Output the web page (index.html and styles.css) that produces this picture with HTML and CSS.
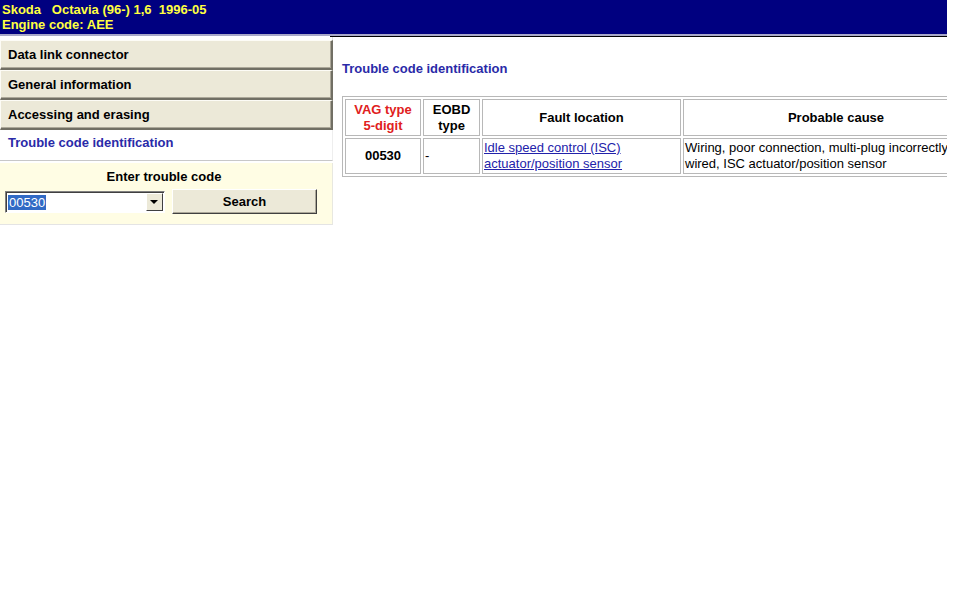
FILE: index.html
```html
<!DOCTYPE html>
<html>
	<head>
		<meta charset="utf-8">
		<title>Trouble code identification</title>
		<link rel="stylesheet" href="styles.css">
	</head>
	<body>
		<div id="page">
			<div class="header">
				<div>Skoda&nbsp;&nbsp;&nbsp;Octavia (96-) 1,6&nbsp;&nbsp;1996-05</div>
				<div>Engine code: AEE</div>
			</div>
			<div class="main">
				<div class="nav">
					<div class="grip"></div>
					<a class="item">Data link connector</a>
					<a class="item">General information</a>
					<a class="item">Accessing and erasing</a>
					<a class="item current">Trouble code identification</a>
					<div class="search">
						<div class="search-title">Enter trouble code</div>
						<div class="search-row">
							<div class="combo">
								<span class="combo-text"><span class="sel">00530</span></span>
								<span class="combo-btn"><span class="arrow"></span></span>
							</div>
							<button class="btn">Search</button>
						</div>
					</div>
				</div>
				<div class="content">
					<h1>Trouble code identification</h1>
					<table class="codes">
						<tr>
							<th class="vag">VAG type<br>5-digit</th>
							<th class="eobd">EOBD<br>type</th>
							<th class="loc">Fault location</th>
							<th class="cause">Probable cause</th>
						</tr>
						<tr>
							<td class="code">00530</td>
							<td>-</td>
							<td><a href="#">Idle speed control (ISC)<br>actuator/position sensor</a></td>
							<td>Wiring, poor connection, multi-plug incorrectly<br>wired, ISC actuator/position sensor</td>
						</tr>
					</table>
				</div>
			</div>
		</div>
	</body>
</html>
```

FILE: styles.css
```css
* {
	margin: 0;
	padding: 0;
	box-sizing: border-box;
}
body {
	font-family: "Liberation Sans", Arial, sans-serif;
	background: #fff;
}
#page {
	width: 947px;
	overflow: hidden;
}
.header {
	height: 36px;
	background: #000080;
	color: #ffff40;
	font-size: 13px;
	font-weight: bold;
	line-height: 15px;
	padding: 2px 2px 0;
	border-bottom: 2px solid #a8a8c8;
}
.main {
	display: flex;
	align-items: flex-start;
}
.nav {
	width: 333px;
	flex: none;
}
.grip {
	height: 4px;
	background: #fff;
	border-right: 1px solid #e0e0e0;
}
.item {
	display: block;
	height: 30px;
	line-height: 28px;
	padding-left: 7px;
	font-size: 13px;
	font-weight: bold;
	color: #000;
	background: #ece9d8;
	border-top: 1px solid #fdfcf6;
	border-left: 1px solid #fdfcf6;
	border-right: 2px solid #716f64;
	border-bottom: 2px solid #716f64;
	box-shadow: inset -1px -1px 0 #aca899;
}
.item.current {
	height: 31px;
	background: #fff;
	color: #2a2aa8;
	border: none;
	border-right: 1px solid #eeeeee;
	border-bottom: 1px solid #c8c8c8;
	box-shadow: none;
	padding-left: 8px;
	line-height: 26px;
}
.search {
	height: 62px;
	margin-top: 2px;
	background: #fffde4;
	border-right: 1px solid #e8e8e0;
	border-bottom: 1px solid #e4e4e4;
	padding: 5px 15px 0 5px;
}
.search-title {
	text-align: center;
	font-size: 13px;
	font-weight: bold;
	padding-left: 6px;
	line-height: 17px;
}
.search-row {
	display: flex;
	align-items: center;
	gap: 7px;
	margin-top: 4px;
}
.combo {
	width: 161px;
	height: 22px;
	display: flex;
	background: #fff;
	border: 1px solid;
	border-color: #808080 #ffffff #ffffff #808080;
	box-shadow: inset 1px 1px 0 #404040;
}
.combo-text {
	flex: 1;
	padding: 3px 0 0 2px;
	font-size: 13px;
	line-height: 15px;
}
.sel {
	background: #316ac5;
	color: #fff;
	padding: 0 1px;
}
.combo-btn {
	width: 17px;
	margin: 1px 1px 1px 0;
	background: #ece9d8;
	border: 1px solid;
	border-color: #fff #404040 #404040 #fff;
	display: flex;
	align-items: center;
	justify-content: center;
}
.arrow {
	width: 0;
	height: 0;
	border-left: 4px solid transparent;
	border-right: 4px solid transparent;
	border-top: 4px solid #000;
}
.btn {
	width: 146px;
	height: 25px;
	font-family: inherit;
	font-size: 13px;
	font-weight: bold;
	background: #ece9d8;
	border: 1px solid;
	border-color: #fff #404040 #404040 #fff;
	box-shadow: inset -1px -1px 0 #aca899;
}
.content {
	flex: 1;
	margin-left: -3px;
	border-top: 1px solid #000;
	padding: 24px 0 0 12px;
}
h1 {
	font-size: 13px;
	font-weight: bold;
	color: #2a2aa8;
	line-height: 16px;
}
.codes {
	margin-top: 19px;
	width: 650px;
	border: 1px solid #b8b8b8;
	border-spacing: 2px;
	font-size: 13px;
	table-layout: fixed;
}
.codes th,
.codes td {
	border: 1px solid #b8b8b8;
	line-height: 16px;
}
.codes th {
	height: 37px;
	color: #000;
}
.codes td {
	height: 36px;
	padding: 1px 1px;
	vertical-align: middle;
	white-space: nowrap;
}
.codes th.vag {
	color: #e02020;
	width: 76px;
}
.codes th.eobd {
	width: 57px;
}
.codes th.loc {
	width: 199px;
}
.codes td.code {
	text-align: center;
	font-weight: bold;
}
.codes a {
	color: #2222aa;
}
```
